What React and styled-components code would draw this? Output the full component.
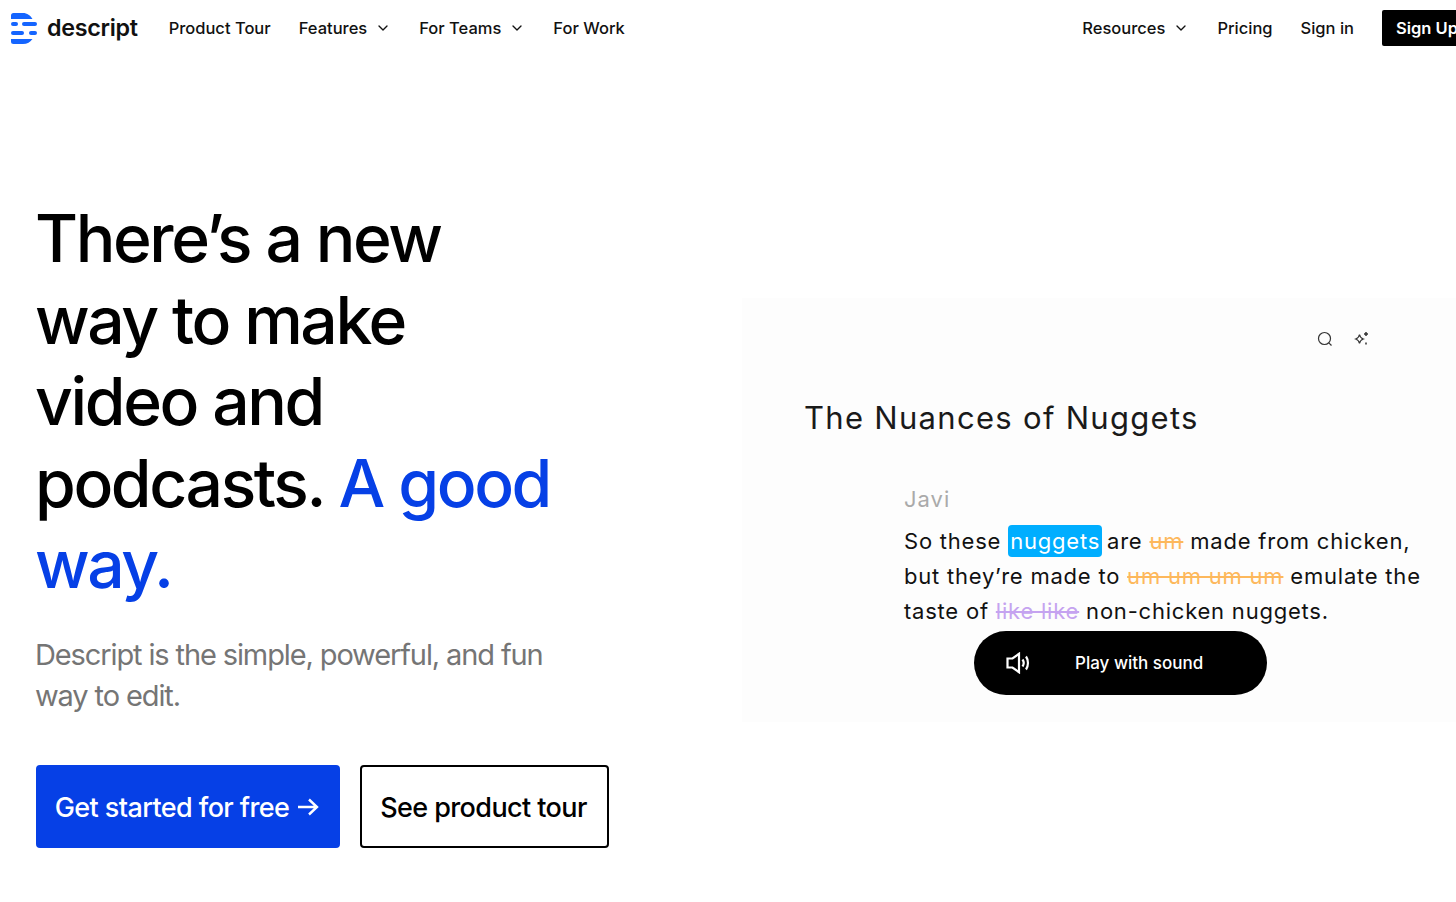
import React from "react";
import styled, { createGlobalStyle } from "styled-components";
import { ChevronDown } from "lucide-react";

const GlobalStyle = createGlobalStyle`
  html, body {
    margin: 0;
    padding: 0;
    background: #fff;
    overflow: hidden;
  }
  body {
    font-family: "Inter", "Liberation Sans", sans-serif;
    color: #000;
  }
`;

const Page = styled.div`
  width: 1456px;
  height: 902px;
  overflow: hidden;
`;

const Nav = styled.nav`
  display: flex;
  align-items: center;
  height: 56px;
  padding-left: 11px;
  width: 1461px;
`;

const LogoWrap = styled.div`
  display: flex;
  align-items: center;
  gap: 10px;
  margin-right: 31px;
`;

const LogoText = styled.span`
  margin-bottom: 2px;
  font-size: 23.3px;
  font-weight: 600;
  letter-spacing: -0.3px;
  color: #111;
`;

const NavGroup = styled.div`
  display: flex;
  align-items: center;
  gap: 28px;
  margin-left: ${(p) => (p.$right ? "auto" : "0")};
`;

const NavItem = styled.a`
  display: flex;
  align-items: center;
  gap: 8px;
  font-size: 16.5px;
  font-weight: 500;
  color: #111;
`;

const SignUp = styled.a`
  display: flex;
  align-items: center;
  justify-content: center;
  width: 90px;
  height: 36px;
  background: #000;
  color: #fff;
  border-radius: 2px;
  font-size: 16.5px;
  font-weight: 600;
`;

const Hero = styled.section`
  display: grid;
  grid-template-columns: 742px 714px;
  padding-top: 142px;
`;

const Copy = styled.div`
  padding-left: 36px;
`;

const Heading = styled.h1`
  margin: 0 0 0 -1px;
  width: 530px;
  font-size: 66px;
  line-height: 81.5px;
  font-weight: 500;
  letter-spacing: -2.4px;
  color: #000;
`;

const Accent = styled.span`
  color: #0640e6;
`;

const Lead = styled.p`
  margin: 28px 0 0 -1px;
  width: 540px;
  font-size: 29px;
  line-height: 41px;
  font-weight: 400;
  letter-spacing: -1.12px;
  color: #757575;
`;

const Actions = styled.div`
  display: flex;
  gap: 20px;
  margin-top: 49px;
`;

const CtaButton = styled.a`
  display: flex;
  align-items: center;
  justify-content: center;
  gap: 8px;
  box-sizing: border-box;
  width: ${(p) => p.$width};
  height: 83px;
  padding-top: 2px;
  padding-right: 2px;
  border-radius: 4px;
  font-size: 27px;
  font-weight: 500;
  letter-spacing: -0.6px;
  background: ${(p) => (p.$primary ? "#0640e6" : "#fff")};
  color: ${(p) => (p.$primary ? "#fff" : "#000")};
  border: 2px solid ${(p) => (p.$primary ? "#0640e6" : "#000")};
`;

const Panel = styled.div`
  align-self: start;
  box-sizing: border-box;
  height: 424px;
  margin-top: 100px;
  background: #fdfdfd;
  padding: 31px 0 0 62px;
`;

const ToolIcons = styled.div`
  display: flex;
  justify-content: flex-end;
  gap: 21px;
  padding-right: 86px;
  height: 20px;
  align-items: center;
`;

const DocTitle = styled.h2`
  margin: 49px 0 0;
  font-size: 31px;
  line-height: 40px;
  font-weight: 400;
  letter-spacing: 1.3px;
  color: #1a1a1a;
`;

const Transcript = styled.div`
  margin: 46px 0 0 100px;
`;

const Speaker = styled.div`
  font-size: 22px;
  line-height: 30px;
  letter-spacing: 1px;
  color: #aaa;
`;

const Lines = styled.p`
  margin: 10px 0 0;
  width: 540px;
  font-size: 22px;
  line-height: 35px;
  letter-spacing: 0.78px;
  color: #111;
  white-space: nowrap;
`;

const Mark = styled.span`
  background: #00aeff;
  color: #fff;
  border-radius: 4px;
  padding: 3px 2px;
  margin-right: -2px;
`;

const Cut = styled.span`
  color: ${(p) => p.$color};
  text-decoration: line-through;
  text-decoration-thickness: 2px;
`;

const PlayButton = styled.a`
  display: flex;
  align-items: center;
  box-sizing: border-box;
  width: 293px;
  height: 64px;
  margin: 2px 0 0 70px;
  padding-left: 32px;
  border-radius: 32px;
  background: #000;
  color: #fff;
  font-size: 17px;
  font-weight: 500;
`;

const PlayLabel = styled.span`
  margin-left: 44px;
`;

const Logo = () => (
  <svg width="26" height="31" viewBox="0 0 26 31" fill="#1565ff">
    <path d="M0 2.500A2.500 2.500 0 0 1 2.500 0H12c4 0 7.500 2.400 9.500 6H0z" />
    <rect x="0" y="9" width="7" height="4" rx="2" />
    <rect x="11" y="9" width="15" height="4" rx="2" />
    <rect x="0" y="18" width="13" height="4" rx="2" />
    <rect x="18" y="18" width="8" height="4" rx="2" />
    <path d="M0 26h21.500c-2 3-5.500 5-9.500 5H2.500A2.500 2.500 0 0 1 0 28.500z" />
  </svg>
);

const SearchIcon = () => (
  <svg width="16" height="16" viewBox="0 0 16 16" fill="none" stroke="#333" strokeWidth="1.200">
    <circle cx="7.500" cy="7.500" r="6" />
    <path d="M11.800 11.800L14.500 14.500" />
  </svg>
);

const SparkleIcon = () => (
  <svg width="16" height="16" viewBox="0 0 16 16" fill="none" stroke="#333" strokeWidth="1.200">
    <path d="M5.500 3.500c.4 2.400 1.400 3.600 3.800 4.500-2.400.9-3.400 2.100-3.800 4.500-.4-2.400-1.400-3.600-3.800-4.500 2.400-.9 3.400-2.100 3.800-4.500z" />
    <path d="M12 1v4M10 3h4M12 11.500v2" strokeWidth="1.500" />
  </svg>
);

const SpeakerIcon = () => (
  <svg width="25" height="22" viewBox="0 0 25 22" fill="none" stroke="#fff" strokeWidth="2.200">
    <path d="M1.500 6.500h5L13 1.800v18.400l-6.500-4.700h-5z" />
    <path d="M16.500 7.500c1.400 2 1.400 5 0 7" />
    <path d="M20 4.500c2.600 3.600 2.600 9.400 0 13" />
  </svg>
);

const ArrowIcon = () => (
  <svg width="22" height="20" viewBox="0 0 22 20" fill="none" stroke="#fff" strokeWidth="2.400">
    <path d="M1 10h19M12 2.500l8 7.500-8 7.500" />
  </svg>
);

const App = () => {
  return (
    <Page>
      <GlobalStyle />
      <Nav>
        <LogoWrap>
          <Logo />
          <LogoText>descript</LogoText>
        </LogoWrap>
        <NavGroup>
          <NavItem>Product Tour</NavItem>
          <NavItem>
            Features <ChevronDown size={16} strokeWidth={2} />
          </NavItem>
          <NavItem>
            For Teams <ChevronDown size={16} strokeWidth={2} />
          </NavItem>
          <NavItem>For Work</NavItem>
        </NavGroup>
        <NavGroup $right>
          <NavItem>
            Resources <ChevronDown size={16} strokeWidth={2} />
          </NavItem>
          <NavItem>Pricing</NavItem>
          <NavItem>Sign in</NavItem>
          <SignUp>Sign Up</SignUp>
        </NavGroup>
      </Nav>
      <Hero>
        <Copy>
          <Heading>
            There’s a new way to make video and podcasts.{" "}
            <Accent>A good way.</Accent>
          </Heading>
          <Lead>Descript is the simple, powerful, and fun way to edit.</Lead>
          <Actions>
            <CtaButton $primary $width="304px">
              Get started for free <ArrowIcon />
            </CtaButton>
            <CtaButton $width="249px">See product tour</CtaButton>
          </Actions>
        </Copy>
        <Panel>
          <ToolIcons>
            <SearchIcon />
            <SparkleIcon />
          </ToolIcons>
          <DocTitle>The Nuances of Nuggets</DocTitle>
          <Transcript>
            <Speaker>Javi</Speaker>
            <Lines>
              So these <Mark>nuggets</Mark> are <Cut $color="#fdb85c">um</Cut>{" "}
              made from chicken,
              <br />
              but they’re made to <Cut $color="#fdb85c">um um um um</Cut> emulate
              the
              <br />
              taste of <Cut $color="#c5a3f0">like like</Cut> non-chicken nuggets.
            </Lines>
            <PlayButton>
              <SpeakerIcon />
              <PlayLabel>Play with sound</PlayLabel>
            </PlayButton>
          </Transcript>
        </Panel>
      </Hero>
    </Page>
  );
};

export default App;
